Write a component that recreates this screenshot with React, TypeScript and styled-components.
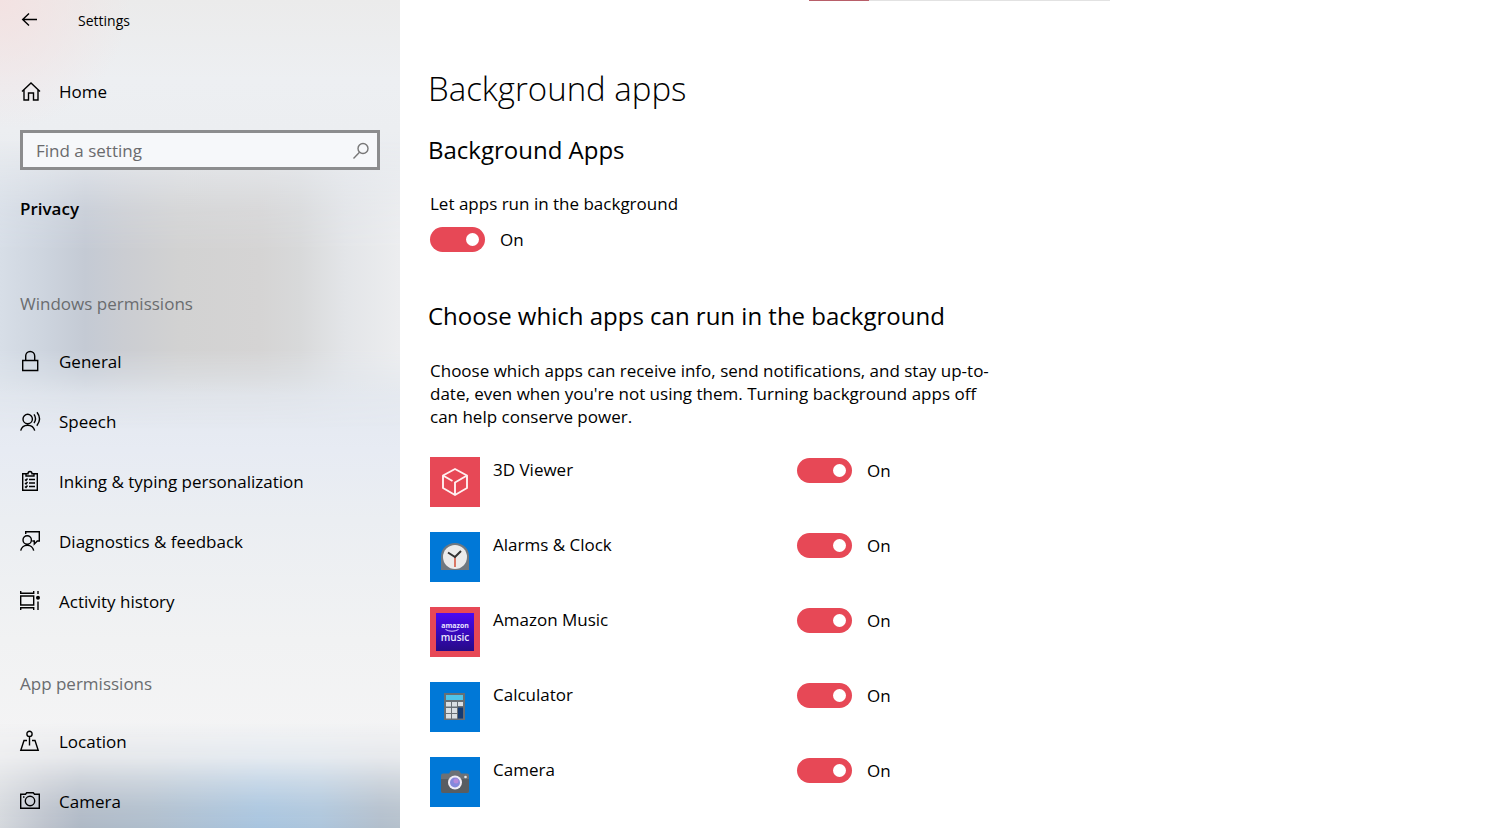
import React, { useState } from "react";
import styled, { createGlobalStyle } from "styled-components";

const Global = createGlobalStyle`
  *, *::before, *::after { box-sizing: border-box; }
  body { margin: 0; background: #fff; color: #000; font-family: "Segoe UI", "Open Sans", "Noto Sans", sans-serif; font-size: 17px; line-height: 24px; }
  h1, h2, h3, p, ul { margin: 0; padding: 0; font-weight: 400; }
  ul { list-style: none; }
`;

const Shell = styled.div`
  display: grid;
  grid-template-columns: 400px minmax(0, 1fr);
  height: 100vh;
  overflow: hidden;
`;

const Sidebar = styled.aside`
  position: relative;
  isolation: isolate;
  overflow: hidden;
  background:
    radial-gradient(ellipse 130px 130px at 0 0, #f3e2e2 0%, #f3e2e200 100%),
    linear-gradient(180deg, #ebebeb 0, #edeff2 80px, #eceef1 130px, #e4e8ee 230px, #e3e8ef 380px, #e7ebf3 450px, #ebeef2 520px, #f1f2f3 640px, #f4f4f5 740px);

  &::before,
  &::after {
    content: "";
    position: absolute;
    z-index: -1;
    left: 0;
    right: 0;
  }
  &::before {
    top: 140px;
    height: 300px;
    background: linear-gradient(90deg, #d7dee7 0, #cdd4de 45px, #c4cad4 85px, #cbcdd2 125px, #d2d2d2 180px, #d5d4d4 260px, #d8d9da 300px, #e3e5e8 345px, #ecedef 400px);
    mask-image: linear-gradient(180deg, transparent 0, #0006 35px, #000c 70px, #000 110px, #000 210px, #0009 235px, #0003 255px, transparent 290px);
  }
  &::after {
    bottom: 0;
    height: 110px;
    background: linear-gradient(90deg, #d3d7dc 0, #bcc2cc 45px, #adb7c4 80px, #adbccb 150px, #a6c3de 260px, #abc4db 320px, #b0bdcb 380px, #b3bfcb 400px);
    mask-image: linear-gradient(180deg, transparent 0, #0003 36px, #0009 62px, #000d 85px, #000 110px);
  }
`;

const TitleBar = styled.div`
  display: flex;
  align-items: center;
  height: 40px;
  padding: 0 20px;
  gap: 38px;
  font-size: 14px;
`;

const BackButton = styled.button`
  display: flex;
  padding: 0;
  border: 0;
  background: none;
  color: inherit;
`;

const Text = styled.span`
  padding-top: 2px;
`;

const Icon = styled.svg`
  display: block;
  flex: none;
  width: 20px;
  height: 22px;
  fill: none;
  stroke: currentColor;
  stroke-width: 1.4;
`;

const NavLink = styled.a`
  display: flex;
  align-items: center;
  gap: 19px;
  height: 60px;
  padding: 0 20px;
  color: inherit;
  text-decoration: none;
`;

const HomeArea = styled.div`
  padding-top: 21px;
`;

const SearchBox = styled.label`
  display: flex;
  align-items: center;
  height: 40px;
  margin: 9px 20px 0;
  padding: 1px 6px 0 13px;
  border: 3px solid #8c8d8e;
  background: #f6f8fa;
  color: #777;
`;

const SearchInput = styled.input`
  flex: 1;
  min-width: 0;
  padding: 0;
  border: 0;
  outline: 0;
  background: none;
  color: #222;
  font: inherit;
  &::placeholder { color: #6a6b6d; opacity: 1; }
`;

const Category = styled.h2`
  padding: 27px 20px 0;
  font-size: 17px;
  line-height: 24px;
  font-weight: 600;
`;

const GroupTitle = styled.h3<{ $space: number }>`
  padding: ${(p) => p.$space}px 20px 15px;
  font-size: 17px;
  line-height: 24px;
  color: #6a6c6f;
`;

const Content = styled.main`
  min-width: 0;
  padding: 0 28px;
`;

const Progress = styled.div`
  display: flex;
  width: 301px;
  height: 1px;
  margin-left: 381px;
  background: #e2e2e2;
`;

const ProgressFill = styled.div`
  width: 60px;
  background: #b85e69;
`;

const Title = styled.h1`
  padding-top: 64px;
  font-size: 33px;
  line-height: 48px;
  font-weight: 300;
`;

const SectionTitle = styled.h2<{ $space: number }>`
  padding-top: ${(p) => p.$space}px;
  font-size: 24px;
  line-height: 32px;
`;

const Body = styled.div`
  padding-left: 2px;
`;

const SwitchCaption = styled.p`
  padding: 26px 0 10px;
`;

const Description = styled.p`
  max-width: 560px;
  padding: 27px 0 29px;
  line-height: 23px;
`;

const SwitchLabel = styled.label`
  display: flex;
  align-items: center;
  gap: 15px;
  height: 26px;
`;

const Switch = styled.input`
  appearance: none;
  display: flex;
  align-items: center;
  justify-content: flex-end;
  width: 55px;
  height: 25px;
  margin: 0;
  padding: 0 6px;
  border-radius: 13px;
  background: #e74856;
  &::before { content: ""; width: 13px; height: 13px; border-radius: 50%; background: #fff; }
  &:not(:checked) { justify-content: flex-start; background: #999; }
`;

const AppRow = styled.li`
  display: grid;
  grid-template-columns: 50px 291px 120px;
  column-gap: 13px;
  height: 75px;
  align-items: start;
`;

const AppName = styled.span`
  padding-top: 1px;
`;

const Tile = styled.svg`
  display: block;
  width: 50px;
  height: 50px;
`;

const Toggle = ({ name }: { name: string }) => {
  const [on, setOn] = useState(true);
  return (
    <SwitchLabel>
      <Switch type="checkbox" role="switch" aria-label={name} checked={on} onChange={() => setOn(!on)} />
      <Text>{on ? "On" : "Off"}</Text>
    </SwitchLabel>
  );
};

const icons = {
  home: <path d="M2 11.500 11 3l9 8.500M4 10v10h4.500v-7h5v7H18V10" />,
  lock: <path d="M2.700 10.500h15v10h-15zM5.700 10.500V6a4.500 4.500 0 0 1 9 0v4.500" />,
  speech: <path d="M.7 20.700a7.200 7.200 0 0 1 14 0M7.700 13.700a4.700 4.700 0 1 0 0-9.400 4.700 4.700 0 0 0 0 9.400M14 4.300q3 4.200 0 8.700M17 2.300q5.200 6.700-.2 13.400" />,
  inking: (
    <>
      <path d="M6 3.700H2.700v16.600h14.600V3.700H14M6 6V3.700h2Q8 1.500 10 1.500t2 2.200h2V6z" />
      <path d="M9 9.500h6M9 13h6M9 16.500h6M5 9.500l1 1 1.500-2M5 13l1 1 1.500-2M5 16.500l1 1 1.500-2" />
    </>
  ),
  feedback: <path d="M.7 20.700a6.600 6.600 0 0 1 13 0M7.200 14.200a4.200 4.200 0 1 0 0-8.400 4.200 4.200 0 0 0 0 8.400M5.700 4V1.700h13.600V11h-2l-3 3v-3h-2" />,
  activity: (
    <>
      <path d="M.7 6h13v9H.7zM.7 1v2.300h13V1M.7 20v-2.300h13V20M18 1v3M18 11.500V20" />
      <circle cx="18" cy="7.700" r="2" fill="currentColor" stroke="none" />
    </>
  ),
  location: <path d="M7 10.500H4L.8 20.300h17.400L15 10.500h-3M9.500 6.500v9M9.500 6.500a2.600 2.600 0 1 0 0-5.200 2.600 2.600 0 0 0 0 5.200" />,
  camera: (
    <>
      <path d="M.7 4.200h4.800l1.200-1.500h6.600l1.200 1.500h4.800v14H.7z" />
      <circle cx="10" cy="11" r="4.700" />
      <path d="M3 7h1.500" />
    </>
  ),
};

type IconName = keyof typeof icons;

const NavItem = ({ icon, label }: { icon: IconName; label: string }) => (
  <NavLink href="#">
    <Icon viewBox="0 0 20 22" overflow="visible" aria-hidden="true">{icons[icon]}</Icon>
    <Text>{label}</Text>
  </NavLink>
);

const windowsItems: [IconName, string][] = [
  ["lock", "General"],
  ["speech", "Speech"],
  ["inking", "Inking & typing personalization"],
  ["feedback", "Diagnostics & feedback"],
  ["activity", "Activity history"],
];

const appItems: [IconName, string][] = [
  ["location", "Location"],
  ["camera", "Camera"],
];

const red = "#e74856";
const blue = "#0078d7";

const apps: { name: string; color: string; art: React.ReactNode }[] = [
  {
    name: "3D Viewer",
    color: red,
    art: <path d="M25 38V25.500l12-7M22.500 24 13 18.500M25 12l12 6.500V31l-12 7-12-7V18.500z" fill="none" stroke="#fff0f1" strokeWidth="1.900" strokeLinejoin="round" />,
  },
  {
    name: "Alarms & Clock",
    color: blue,
    art: (
      <>
        <path d="M11 38V24a14 13 0 0 1 28 0v14z" fill="#6f7880" />
        <circle cx="25" cy="25" r="12" fill="#ebebeb" />
        <path d="M25 25v10" stroke="#d2452c" strokeWidth="1.400" />
        <path d="M18 20.500 25 25l6-6" fill="none" stroke="#333" strokeWidth="2" />
      </>
    ),
  },
  {
    name: "Amazon Music",
    color: red,
    art: (
      <>
        <defs>
          <linearGradient id="music" x1="0" y1="0" x2="0" y2="1">
            <stop offset="0" stopColor="#4a08f4" />
            <stop offset="1" stopColor="#260a86" />
          </linearGradient>
        </defs>
        <path d="M6 6h38v38H6z" fill="url(#music)" />
        <g fill="#e9e4ff" textAnchor="middle" fontFamily="Open Sans, sans-serif">
          <text x="25" y="21" fontSize="7" fontWeight="700">amazon</text>
          <text x="25" y="34" fontSize="10" fontWeight="600">music</text>
        </g>
        <path d="M15.500 22.500q6.500 3.500 13 0" fill="none" stroke="#d9d0ff" strokeWidth="1" />
      </>
    ),
  },
  {
    name: "Calculator",
    color: blue,
    art: (
      <>
        <path d="M14 11h21v27H14z" fill="#686f75" />
        <path d="M16 13h17v5H16z" fill="#50c4e9" />
        <path d="M16 20h5v4.500h-5zM22 20h5v4.500h-5zM28 20h5v4h-5zM16 26h5v5h-5zM22 26h5v5h-5zM16 32h5v4.500h-5zM22 32h5v4.500h-5z" fill="#dadfe3" />
        <path d="M28 25.500h5v11h-5z" fill="#153b72" />
      </>
    ),
  },
  {
    name: "Camera",
    color: blue,
    art: (
      <>
        <path d="M11 18.500q0-2 2-2h6l2-3h8l2 3h6q2 0 2 2V34q0 2-2 2H13q-2 0-2-2z" fill="#6d7175" />
        <path d="M11 22h28v12q0 2-2 2H13q-2 0-2-2z" fill="#585d62" />
        <circle cx="25" cy="25.500" r="7" fill="#f0edf5" />
        <circle cx="25" cy="25.500" r="5" fill="#8488dc" />
        <circle cx="26" cy="24" r="2.500" fill="#b58adb" />
        <circle cx="35.500" cy="20" r="1.300" fill="#e8e8e8" />
      </>
    ),
  },
];

export default function App() {
  return (
    <>
      <Global />
      <Shell>
        <Sidebar>
          <TitleBar>
            <BackButton aria-label="Back">
              <Icon viewBox="0 0 20 22" aria-hidden="true"><path d="M17 10.500H2.500M9 4.500l-6.300 6L9 16.500" /></Icon>
            </BackButton>
            <Text>Settings</Text>
          </TitleBar>
          <HomeArea><NavItem icon="home" label="Home" /></HomeArea>
          <SearchBox>
            <SearchInput type="search" placeholder="Find a setting" aria-label="Find a setting" />
            <Icon viewBox="0 0 20 22" aria-hidden="true"><circle cx="12" cy="8.500" r="5" /><path d="M8.500 12.200 2.500 18.500" /></Icon>
          </SearchBox>
          <Category>Privacy</Category>
          <nav>
            <GroupTitle $space={71}>Windows permissions</GroupTitle>
            {windowsItems.map(([icon, label]) => <NavItem key={label} icon={icon} label={label} />)}
            <GroupTitle $space={41}>App permissions</GroupTitle>
            {appItems.map(([icon, label]) => <NavItem key={label} icon={icon} label={label} />)}
          </nav>
        </Sidebar>
        <Content>
          <Progress><ProgressFill /></Progress>
          <Title>Background apps</Title>
          <SectionTitle $space={21}>Background Apps</SectionTitle>
          <Body>
            <SwitchCaption>Let apps run in the background</SwitchCaption>
            <Toggle name="Let apps run in the background" />
          </Body>
          <SectionTitle $space={48}>Choose which apps can run in the background</SectionTitle>
          <Body>
            <Description>
              Choose which apps can receive info, send notifications, and stay up-to-date, even when you're not using them. Turning background apps off can help conserve power.
            </Description>
            <ul>
              {apps.map((app) => (
                <AppRow key={app.name}>
                  <Tile viewBox="0 0 50 50" aria-hidden="true">
                    <path d="M0 0h50v50H0z" fill={app.color} />
                    {app.art}
                  </Tile>
                  <AppName>{app.name}</AppName>
                  <Toggle name={app.name} />
                </AppRow>
              ))}
            </ul>
          </Body>
        </Content>
      </Shell>
    </>
  );
}
